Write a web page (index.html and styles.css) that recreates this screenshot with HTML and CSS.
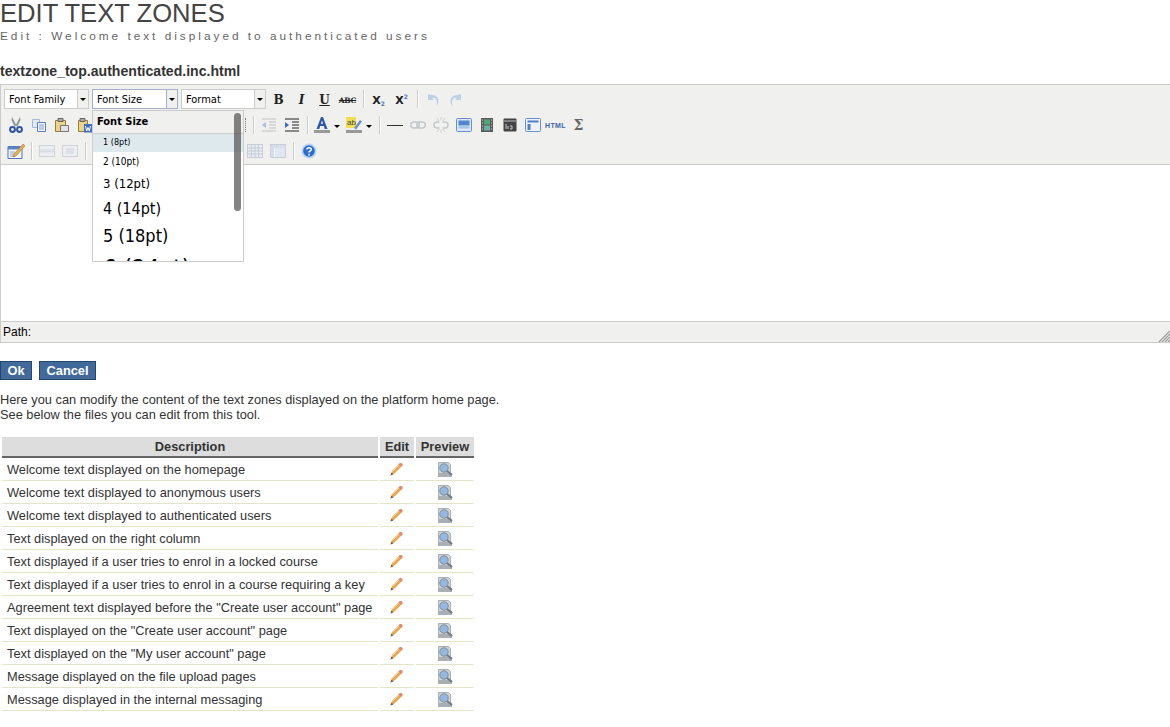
FILE: index.html
```html
<!DOCTYPE html>
<html lang="en">
<head>
  <meta charset="UTF-8" />
  <title>Edit text zones</title>
  <link rel="stylesheet" href="styles.css">
</head>
<body>
  <svg class="defs" width="0" height="0">
    <symbol id="i-cut" viewBox="0 0 16 16"><path d="M4 0l4.500 8.500L6.500 9.500 3.500 3zM12 0L7.500 8.500 9.500 9.500 12.500 3z" fill="#8f979f"/><circle cx="4.500" cy="12.500" r="2.400" fill="none" stroke="#2f55a4" stroke-width="2"/><circle cx="11.500" cy="12.500" r="2.400" fill="none" stroke="#2f55a4" stroke-width="2"/></symbol>
    <symbol id="i-copy" viewBox="0 0 16 16"><path d="M1.500 2.500h7v8h-7z" fill="#dfe8f6" stroke="#a3b8da"/><path d="M6.500 5.500h8v9h-8z" fill="#f4f7fd" stroke="#5a80c0"/><path d="M8 8h5M8 10h5M8 12h5" stroke="#86a0cf"/></symbol>
    <symbol id="i-paste" viewBox="0 0 16 16"><path d="M1.500 3.500h10v11h-10z" fill="#ecd48c" stroke="#9c7c34"/><path d="M4 1.500h5v3H4z" fill="#aaa" stroke="#666"/><path d="M6.500 8.500h8v6h-8z" fill="#e4e4e4" stroke="#777"/></symbol>
    <symbol id="i-word" viewBox="0 0 16 16"><path d="M1.500 3.500h9v11h-9z" fill="#ecd48c" stroke="#9c7c34"/><path d="M3 1.500h5v3H3z" fill="#aaa" stroke="#666"/><path d="M7 7h8.500v8.500H7z" fill="#3f6fc0"/><path d="M8.500 9l1.200 5 1.300-3.500 1.300 3.500L13.500 9" fill="none" stroke="#fff"/></symbol>
    <symbol id="i-outdent" viewBox="0 0 16 16"><path d="M1 2h14M8 5h7M8 8h7M8 11h7M1 14h14" stroke="#c0c0c0"/><path d="M1 8l4-3v6z" fill="#a8c0e4"/></symbol>
    <symbol id="i-indent" viewBox="0 0 16 16"><path d="M1 2h14M8 5h7M8 8h7M8 11h7M1 14h14" stroke="#222"/><path d="M5 8L1 5v6z" fill="#2f6fd0"/></symbol>
    <symbol id="i-forecolor" viewBox="0 0 16 16"><path d="M2.500 12L7 0h2l4.500 12h-2.800l-.9-3H6.200l-.9 3zM6.900 6.800h2.200L8 3.500z" fill-rule="evenodd" fill="#2d5aa8"/><path d="M0 13h16v3H0z" fill="#999"/></symbol>
    <symbol id="i-link" viewBox="0 0 16 16"><rect x=".8" y="5" width="8.500" height="6" rx="3" fill="none" stroke="#c4c8cc" stroke-width="1.500"/><rect x="6.800" y="5" width="8.500" height="6" rx="3" fill="none" stroke="#c4c8cc" stroke-width="1.500"/></symbol>
    <symbol id="i-unlink" viewBox="0 0 16 16"><path d="M6.500 5H4a3 3 0 000 6h2.500M9.500 5H12a3 3 0 010 6H9.500" fill="none" stroke="#c4c8cc" stroke-width="1.500"/><path d="M8 0v3.500M4 1l2 3M12 1l-2 3M8 12.500V16M4 15l2-3M12 15l-2-3" stroke="#d0d0d0"/></symbol>
    <symbol id="i-image" viewBox="0 0 16 16"><rect x=".5" y="1.500" width="15" height="13" rx="1" fill="#dbe6f6" stroke="#6b8fc6"/><path d="M2.500 3.500h11v5h-11z" fill="#4f86cc"/><path d="M2.500 8.500h11v3h-11z" fill="#a8c8e8"/></symbol>
    <symbol id="i-media" viewBox="0 0 16 16"><path d="M2 1h12v14H2z" fill="#5a5a5a"/><path d="M5 2.500h6v5H5z" fill="#52a874"/><path d="M5 8.500h6v5H5z" fill="#6bb0a0"/><path d="M3 3h1M3 6h1M3 9h1M3 12h1M12 3h1M12 6h1M12 9h1M12 12h1" stroke="#ddd"/></symbol>
    <symbol id="i-flash" viewBox="0 0 16 16"><rect x="1.500" y="1.500" width="13" height="13" rx="1" fill="#444"/><path d="M2 4h12" stroke="#bbb"/><path d="M4 7v5M6 9v3M8 9h2v3H8" stroke="#ccc" fill="none"/></symbol>
    <symbol id="i-template" viewBox="0 0 16 16"><rect x=".5" y="1.500" width="15" height="13" rx="1" fill="#eef3fb" stroke="#6b8fc6"/><path d="M2.500 3.500h11v2h-11zM2.500 7h3v6h-3z" fill="#4f7fc4"/></symbol>
    <symbol id="i-edit" viewBox="0 0 18 18"><path d="M1 4.500h14v12H1z" fill="#f2f5fa" stroke="#4f74b8"/><path d="M1 4.500h14v3H1z" fill="#5a86c8"/><path d="M3 10h5M3 12h5M3 14h5" stroke="#8fa6cc"/><path d="M7 12l9-10 2 2-9 10-3 1z" fill="#e8b04c" stroke="#9a6a20" stroke-width=".5"/></symbol>
    <symbol id="i-row" viewBox="0 0 16 16"><rect x=".5" y="2.500" width="15" height="11" fill="#eceef1" stroke="#cfd3d8"/><path d="M1 6.500h14v3H1z" fill="#dcdfe4"/></symbol>
    <symbol id="i-cell" viewBox="0 0 16 16"><rect x=".5" y="2.500" width="15" height="11" fill="#eceef1" stroke="#cfd3d8"/><rect x="4" y="5" width="8" height="6" fill="#dde1e7"/></symbol>
    <symbol id="i-grid" viewBox="0 0 16 16"><rect x=".5" y="1.500" width="15" height="13" fill="#e8ecf3" stroke="#c8cdd7"/><path d="M1 5h14M1 8h14M1 11h14M4.500 2v12M8 2v12M11.500 2v12" stroke="#c8cdd7"/></symbol>
    <symbol id="i-table" viewBox="0 0 16 16"><rect x=".5" y="1.500" width="15" height="13" fill="#f0f3f8" stroke="#c8cdd7"/><path d="M1 2h14v3H1zM1 5h3v9H1z" fill="#d6deea"/><path d="M5 5h10v9H5z" fill="#dfe7f4"/></symbol>
    <symbol id="i-help" viewBox="0 0 16 16"><circle cx="8" cy="8" r="7.500" fill="#bcd4f2"/><circle cx="8" cy="8" r="5.800" fill="#2a6cd0"/><path d="M5.800 6.500C6 4 10.300 4 10.300 6.500 10.300 8 8 8 8 9.500" fill="none" stroke="#fff" stroke-width="1.500"/><path d="M7.200 10.800h1.600v1.600H7.200z" fill="#fff"/></symbol>
    <symbol id="i-pencil" viewBox="0 0 16 16"><path d="M1.500 14.500l1.500-4.500L10.500 2.500c1.500-1.500 4 1 2.500 2.500L5.500 12.500z" fill="#e9a64c"/><path d="M10.500 2.500c1.500-1.500 4 1 2.500 2.500L12 6 9.500 3.500z" fill="#e08a74"/><path d="M3.500 10.500L10 4" stroke="#f6d49a"/><path d="M1.500 14.500l.9-2.900 2 2z" fill="#6a5c4c"/></symbol>
    <symbol id="i-preview" viewBox="0 0 16 16"><path d="M1.500 1.500h10l2 2v11h-12z" fill="#cdd3d7" stroke="#a8afb5"/><path d="M1 12h14v4H1z" fill="#a8afb5"/><circle cx="7" cy="7" r="4.200" fill="#94b8e4" stroke="#868d93"/><path d="M10 10l5 4" stroke="#757b81" stroke-width="2.200"/></symbol>
  </svg>

  <h1>EDIT TEXT ZONES</h1>
  <p class="subtitle">Edit : Welcome text displayed to authenticated users</p>
  <h4 class="filename">textzone_top.authenticated.inc.html</h4>

  <div class="editor">
    <div class="toolbar">
      <div class="tb-row tb-selects">
        <div class="combo combo-family"><span>Font Family</span><i class="combo-arrow"></i></div>
        <div class="combo combo-size"><span>Font Size</span><i class="combo-arrow"></i></div>
        <div class="combo combo-format"><span>Format</span><i class="combo-arrow"></i></div>
        <span class="tb-btn glyph g-bold">B</span>
        <span class="tb-btn glyph g-italic">I</span>
        <span class="tb-btn glyph g-under">U</span>
        <span class="tb-btn glyph g-strike">ABC</span>
        <span class="sep"></span>
        <span class="tb-btn glyph g-script">X<sub>2</sub></span>
        <span class="tb-btn glyph g-script">X<sup>2</sup></span>
        <span class="sep"></span>
        <span class="tb-btn"><svg class="ico" viewBox="0 0 16 16"><path d="M3 2v6h6L7 6c3-1 5 1 5 5l-1 3c4-3 4-11-5-11z" fill="#bcd0ea"/></svg></span>
        <span class="tb-btn"><svg class="ico" viewBox="0 0 16 16"><path d="M13 2v6H7l2-2C6 5 4 7 4 11l1 3C1 11 1 3 10 3z" fill="#bcd0ea"/></svg></span>
      </div>
      <div class="tb-row">
        <span class="tb-btn"><svg class="ico"><use href="#i-cut"/></svg></span>
        <span class="tb-btn"><svg class="ico"><use href="#i-copy"/></svg></span>
        <span class="tb-btn"><svg class="ico"><use href="#i-paste"/></svg></span>
        <span class="tb-btn"><svg class="ico"><use href="#i-word"/></svg></span>
        <span class="hidden-btns hidden-dotted"></span>
        <span class="sep"></span>
        <span class="tb-btn"><svg class="ico"><use href="#i-outdent"/></svg></span>
        <span class="tb-btn"><svg class="ico"><use href="#i-indent"/></svg></span>
        <span class="sep"></span>
        <span class="tb-btn tb-split"><svg class="ico"><use href="#i-forecolor"/></svg><i class="split-arrow"></i></span>
        <span class="tb-btn tb-split">
          <svg class="ico" viewBox="0 0 16 16"><path d="M0 0h10v11H0z" fill="#eedd55"/><text x="1" y="8" font-family="Liberation Sans" font-size="8" fill="#444">ab</text><path d="M8 11l6-8 2 1.500-6 8z" fill="#6a90cc"/><path d="M0 13h16v3H0z" fill="#999"/></svg>
          <i class="split-arrow"></i>
        </span>
        <span class="sep"></span>
        <span class="tb-btn"><i class="hr-line"></i></span>
        <span class="tb-btn"><svg class="ico"><use href="#i-link"/></svg></span>
        <span class="tb-btn"><svg class="ico"><use href="#i-unlink"/></svg></span>
        <span class="tb-btn"><svg class="ico"><use href="#i-image"/></svg></span>
        <span class="tb-btn"><svg class="ico"><use href="#i-media"/></svg></span>
        <span class="tb-btn"><svg class="ico"><use href="#i-flash"/></svg></span>
        <span class="tb-btn"><svg class="ico"><use href="#i-template"/></svg></span>
        <span class="tb-btn glyph g-html">HTML</span>
        <span class="tb-btn glyph g-sigma">Σ</span>
      </div>
      <div class="tb-row">
        <span class="tb-btn"><svg class="ico ico-big"><use href="#i-edit"/></svg></span>
        <span class="sep"></span>
        <span class="tb-btn"><svg class="ico"><use href="#i-row"/></svg></span>
        <span class="tb-btn"><svg class="ico"><use href="#i-cell"/></svg></span>
        <span class="sep"></span>
        <span class="hidden-btns"></span>
        <span class="tb-btn"><svg class="ico"><use href="#i-grid"/></svg></span>
        <span class="tb-btn"><svg class="ico"><use href="#i-table"/></svg></span>
        <span class="sep"></span>
        <span class="tb-btn"><svg class="ico"><use href="#i-help"/></svg></span>
      </div>
    </div>
    <div class="edit-area"></div>
    <div class="statusbar">
      <span>Path:</span>
      <svg class="resize" viewBox="0 0 12 12"><path d="M12 1L1 12M12 4l-8 8M12 7l-5 5M12 10l-2 2" stroke="#999" stroke-width="1.200"/></svg>
    </div>

    <div class="size-menu">
      <div class="menu-title">Font Size</div>
      <div class="menu-item sz1 active">1 (8pt)</div>
      <div class="menu-item sz2">2 (10pt)</div>
      <div class="menu-item sz3">3 (12pt)</div>
      <div class="menu-item sz4">4 (14pt)</div>
      <div class="menu-item sz5">5 (18pt)</div>
      <div class="menu-item sz6">6 (24pt)</div>
      <i class="menu-scroll"></i>
    </div>
  </div>

  <div class="actions">
    <button class="btn">Ok</button>
    <button class="btn">Cancel</button>
  </div>

  <p class="intro">Here you can modify the content of the text zones displayed on the platform home page.<br>See below the files you can edit from this tool.</p>

  <table class="zones">
    <thead>
      <tr><th class="col-desc">Description</th><th class="col-edit">Edit</th><th class="col-prev">Preview</th></tr>
    </thead>
    <tbody>
      <tr><td>Welcome text displayed on the homepage</td><td class="c"><svg class="ico"><use href="#i-pencil"/></svg></td><td class="c"><svg class="ico"><use href="#i-preview"/></svg></td></tr>
      <tr><td>Welcome text displayed to anonymous users</td><td class="c"><svg class="ico"><use href="#i-pencil"/></svg></td><td class="c"><svg class="ico"><use href="#i-preview"/></svg></td></tr>
      <tr><td>Welcome text displayed to authenticated users</td><td class="c"><svg class="ico"><use href="#i-pencil"/></svg></td><td class="c"><svg class="ico"><use href="#i-preview"/></svg></td></tr>
      <tr><td>Text displayed on the right column</td><td class="c"><svg class="ico"><use href="#i-pencil"/></svg></td><td class="c"><svg class="ico"><use href="#i-preview"/></svg></td></tr>
      <tr><td>Text displayed if a user tries to enrol in a locked course</td><td class="c"><svg class="ico"><use href="#i-pencil"/></svg></td><td class="c"><svg class="ico"><use href="#i-preview"/></svg></td></tr>
      <tr><td>Text displayed if a user tries to enrol in a course requiring a key</td><td class="c"><svg class="ico"><use href="#i-pencil"/></svg></td><td class="c"><svg class="ico"><use href="#i-preview"/></svg></td></tr>
      <tr><td>Agreement text displayed before the "Create user account" page</td><td class="c"><svg class="ico"><use href="#i-pencil"/></svg></td><td class="c"><svg class="ico"><use href="#i-preview"/></svg></td></tr>
      <tr><td>Text displayed on the "Create user account" page</td><td class="c"><svg class="ico"><use href="#i-pencil"/></svg></td><td class="c"><svg class="ico"><use href="#i-preview"/></svg></td></tr>
      <tr><td>Text displayed on the "My user account" page</td><td class="c"><svg class="ico"><use href="#i-pencil"/></svg></td><td class="c"><svg class="ico"><use href="#i-preview"/></svg></td></tr>
      <tr><td>Message displayed on the file upload pages</td><td class="c"><svg class="ico"><use href="#i-pencil"/></svg></td><td class="c"><svg class="ico"><use href="#i-preview"/></svg></td></tr>
      <tr><td>Message displayed in the internal messaging</td><td class="c"><svg class="ico"><use href="#i-pencil"/></svg></td><td class="c"><svg class="ico"><use href="#i-preview"/></svg></td></tr>
    </tbody>
  </table>
</body>
</html>
```

FILE: styles.css
```css
body {
  margin: 0;
  background: #fff;
  color: #333;
  font-family: "Liberation Sans", Arial, sans-serif;
  font-size: 12.8px;
  overflow: hidden;
}
.defs {
  position: absolute;
}
h1 {
  margin: 0;
  font-size: 25.6px;
  font-weight: normal;
  line-height: 27px;
  color: #444;
}
.subtitle {
  margin: 2px 0 0;
  font-size: 11.8px;
  line-height: 14px;
  letter-spacing: 3px;
  color: #666;
}
.filename {
  margin: 20px 0 0;
  font-size: 14.08px;
  line-height: 16px;
  font-weight: bold;
}

/* editor */
.editor {
  position: relative;
  margin-top: 5px;
  border: 1px solid #ccc;
  border-right: 0;
  background: #f0f0ee;
}
.toolbar {
  height: 80px;
  padding: 4px 0 0 3px;
  box-sizing: border-box;
  border-bottom: 1px solid #ccc;
}
.tb-row {
  display: flex;
  align-items: center;
  height: 26px;
}
.tb-selects {
  height: 20px;
  margin-bottom: 3px;
}
.tb-selects .tb-btn {
  padding-top: 2px;
  box-sizing: border-box;
}
.tb-btn {
  display: flex;
  align-items: center;
  justify-content: center;
  flex: none;
  width: 23px;
  height: 20px;
}
.ico {
  width: 16px;
  height: 16px;
  display: block;
}
.ico-big {
  width: 18px;
  height: 18px;
}
.sep {
  flex: none;
  width: 1px;
  height: 18px;
  margin: 0 3px 0 4px;
  background: #ccc;
  box-shadow: 1px 0 0 #fff;
}
.hidden-btns {
  flex: none;
  width: 154px;
}
.hidden-dotted {
  width: 149px;
  height: 14px;
  margin-right: 3px;
  border-right: 1px dotted #777;
}
.combo {
  display: flex;
  flex: none;
  height: 20px;
  margin-right: 3px;
  border: 1px solid #ccc;
  box-sizing: border-box;
  background: #fff;
  font-family: "DejaVu Sans Condensed", "DejaVu Sans", sans-serif;
  font-size: 11px;
  line-height: 20px;
  color: #000;
}
.combo span {
  flex: 1;
  padding-left: 4px;
  white-space: nowrap;
}
.combo-arrow {
  position: relative;
  width: 10px;
  border-left: 1px solid #ccc;
  background: #f0f0ee;
}
.combo-arrow::after, .split-arrow::after {
  content: "";
  position: absolute;
  left: 2px;
  top: 8px;
  border: 3px solid transparent;
  border-top-color: #000;
  border-bottom: 0;
}
.combo-family {
  width: 85px;
}
.combo-size {
  width: 86px;
  border-color: #a3b0c8;
}
.combo-size .combo-arrow {
  border-color: #a3b0c8;
}
.combo-format {
  width: 85px;
  margin-right: 1px;
}
.glyph {
  font-family: "DejaVu Serif", serif;
  font-weight: bold;
  font-size: 12px;
  color: #222;
}
.g-italic {
  font-style: italic;
}
.g-under {
  text-decoration: underline;
}
.g-strike {
  font-size: 7.500px;
  letter-spacing: -.3px;
  text-decoration: line-through;
}
.g-script {
  font-family: "DejaVu Sans", sans-serif;
  font-size: 11px;
}
.g-script sub, .g-script sup {
  font-size: 6px;
  line-height: 6px;
  color: #4f74b8;
}
.g-script sub {
  margin-top: 7px;
}
.g-script sup {
  margin-top: -7px;
}
.g-html {
  font-family: "Liberation Sans", sans-serif;
  font-size: 7px;
  letter-spacing: .4px;
  color: #3a66b0;
}
.g-sigma {
  font-size: 14px;
  color: #666;
}
.tb-split {
  position: relative;
  width: 32px;
  justify-content: flex-start;
  padding-left: 3px;
  box-sizing: border-box;
}
.split-arrow {
  position: absolute;
  left: 21px;
  top: 2px;
}
.hr-line {
  display: block;
  width: 16px;
  height: 1px;
  background: #333;
}
.edit-area {
  height: 156px;
  background: #fff;
}
.statusbar {
  position: relative;
  height: 21px;
  box-sizing: border-box;
  border-top: 1px solid #ccc;
  padding-left: 2px;
  font-size: 12px;
  line-height: 20px;
  color: #000;
}
.resize {
  position: absolute;
  right: 0;
  bottom: 0;
  width: 12px;
  height: 12px;
}

/* font size dropdown */
.size-menu {
  position: absolute;
  left: 91px;
  top: 25px;
  width: 152px;
  height: 152px;
  box-sizing: border-box;
  border: 1px solid #ccc;
  background: #fff;
  overflow: hidden;
  font-family: "DejaVu Sans Condensed", "DejaVu Sans", sans-serif;
  color: #000;
}
.menu-title {
  height: 22px;
  padding-left: 4px;
  border-bottom: 1px solid #ccc;
  background: #f0f0ee;
  font-size: 11px;
  font-weight: bold;
  line-height: 22px;
}
.menu-item {
  padding-left: 10px;
  white-space: nowrap;
}
.active {
  background: #dee9ee;
}
.sz1 {
  font-size: 9px;
  line-height: 17px;
  padding-bottom: 1px;
}
.sz2 {
  font-size: 10px;
  line-height: 20px;
}
.sz3 {
  font-size: 13px;
  line-height: 24px;
}
.sz4 {
  font-size: 16px;
  line-height: 26px;
}
.sz5 {
  font-size: 18px;
  line-height: 28px;
}
.sz6 {
  font-size: 24px;
  line-height: 38px;
}
.menu-scroll {
  position: absolute;
  right: 2px;
  top: 2px;
  width: 7px;
  height: 98px;
  border-radius: 4px;
  background: rgba(80, 80, 80, .7);
}

/* buttons and table */
.actions {
  display: flex;
  gap: 7px;
  margin-top: 18px;
}
.btn {
  height: 19px;
  padding: 0 6.500px;
  border: 1px solid #23466f;
  background: #41699a;
  color: #fff;
  font-family: inherit;
  font-size: 12.8px;
  font-weight: bold;
  line-height: 17px;
}
.intro {
  margin: 12px 0 0;
  line-height: 15px;
}
.zones {
  margin-top: 15px;
  border-collapse: separate;
  border-spacing: 2px 0;
  font-size: 12.8px;
}
.zones th {
  height: 21px;
  padding: 0 0 1px;
  background: #ddd;
  border-bottom: 2px solid #666;
  box-sizing: border-box;
  font-size: 12.8px;
}
.col-desc {
  width: 376px;
}
.col-edit {
  width: 34px;
}
.col-prev {
  width: 58px;
}
.zones td {
  height: 23px;
  padding: 0 0 0 5px;
  box-sizing: border-box;
  border-bottom: 1px solid #e3e4c8;
}
.zones td.c {
  padding: 0;
}
.zones td.c .ico {
  margin: 0 auto;
}
```
